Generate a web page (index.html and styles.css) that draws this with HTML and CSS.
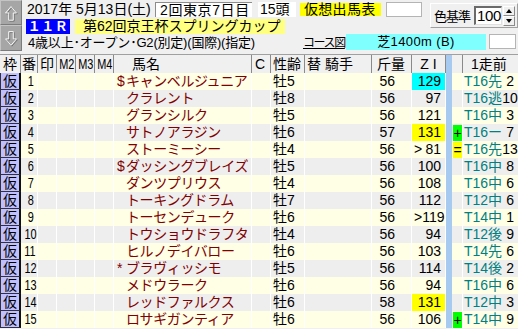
FILE: index.html
```html
<!DOCTYPE html>
<html lang="ja">
<head>
<meta charset="utf-8">
<link rel="stylesheet" href="styles.css">
</head>
<body>
<div class="top">
  <div class="arrows">
    <div class="abtn up">
      <svg width="22" height="23" viewBox="0 0 22 23">
        <polygon points="12,6 18,13 14.5,13 14.5,21 9.5,21 9.5,13 6,13" fill="none" stroke="#6e6e6e"/>
        <polygon points="11,5 17,12 13.5,12 13.5,20 8.5,20 8.5,12 5,12" fill="none" stroke="#fff"/>
      </svg>
    </div>
    <div class="abtn down">
      <svg width="22" height="24" viewBox="0 0 22 24">
        <polygon points="12,21 18,14 14.5,14 14.5,6 9.5,6 9.5,14 6,14" fill="none" stroke="#6e6e6e"/>
        <polygon points="11,20 17,13 13.5,13 13.5,5 8.5,5 8.5,13 5,13" fill="none" stroke="#fff"/>
      </svg>
    </div>
  </div>
  <div class="info">
    <div class="upper">
      <div class="lines">
        <div class="line1">
          <span class="date">2017年 5月13日(土)</span>
          <span class="meet">2回東京7日目</span>
          <span class="heads">15頭</span>
          <span class="kind">仮想出馬表</span>
          <span class="blank1"></span>
        </div>
        <div class="line2">
          <span class="rno">１１Ｒ</span>
          <span class="rname">第62回京王杯スプリングカップ</span>
        </div>
      </div>
      <div class="panel">
        <span class="plabel">色基準</span>
        <span class="pinput">100</span>
        <span class="spin">
          <span class="sbtn"><svg width="10" height="8" viewBox="0 0 10 8"><polygon points="5,2 8,6 2,6" fill="#000"/></svg></span>
          <span class="sbtn"><svg width="10" height="8" viewBox="0 0 10 8"><polygon points="2,2 8,2 5,6" fill="#000"/></svg></span>
        </span>
      </div>
    </div>
    <div class="line3">
      <span class="cond">4歳以上･オープン･G2(別定)(国際)(指定)</span>
      <span class="clink">コース図</span>
      <span class="course">芝1400m (B)</span>
      <span class="blank2"></span>
    </div>
  </div>
</div>

<div class="table">
  <div class="row hdr">
    <div class="c ctr">枠</div>
    <div class="c ctr">番</div>
    <div class="c ctr">印</div>
    <div class="c ctr"><span class="nar">M2</span></div>
    <div class="c ctr"><span class="nar">M3</span></div>
    <div class="c ctr"><span class="nar">M4</span></div>
    <div class="c hname">馬名</div>
    <div class="c hc">C</div>
    <div class="c sx">性齢</div>
    <div class="c sx">替 騎手</div>
    <div class="c hkin">斤量</div>
    <div class="c ctr hzi">ZI</div>
    <div class="st"></div>
    <div class="c"></div>
    <div class="c hprev">1走前</div>
  </div>
  <div class="rows">
    <div class="row"><div class="waku">仮</div><div class="c no"><span class="nar">1</span></div><div class="c"></div><div class="c"></div><div class="c"></div><div class="c"></div><div class="c nm"><span class="pre">$</span>キャンベルジュニア</div><div class="c"></div><div class="c sx">牡5</div><div class="c"></div><div class="c kin">56</div><div class="c zi cy">129</div><div class="st"></div><div class="c mk"></div><div class="c prev"><span class="pos">T16先</span><span class="rk">2</span></div></div>
    <div class="row"><div class="waku">仮</div><div class="c no"><span class="nar">2</span></div><div class="c"></div><div class="c"></div><div class="c"></div><div class="c"></div><div class="c nm"><span class="pre"></span>クラレント</div><div class="c"></div><div class="c sx">牡8</div><div class="c"></div><div class="c kin">56</div><div class="c zi">97</div><div class="st"></div><div class="c mk"></div><div class="c prev"><span class="pos">T16逃</span><span class="rk">10</span></div></div>
    <div class="row"><div class="waku">仮</div><div class="c no"><span class="nar">3</span></div><div class="c"></div><div class="c"></div><div class="c"></div><div class="c"></div><div class="c nm"><span class="pre"></span>グランシルク</div><div class="c"></div><div class="c sx">牡5</div><div class="c"></div><div class="c kin">56</div><div class="c zi">121</div><div class="st"></div><div class="c mk"></div><div class="c prev"><span class="pos">T16中</span><span class="rk">3</span></div></div>
    <div class="row"><div class="waku">仮</div><div class="c no"><span class="nar">4</span></div><div class="c"></div><div class="c"></div><div class="c"></div><div class="c"></div><div class="c nm"><span class="pre"></span>サトノアラジン</div><div class="c"></div><div class="c sx">牡6</div><div class="c"></div><div class="c kin">57</div><div class="c zi yl">131</div><div class="st"></div><div class="c mk"><span class="mkv gr">+</span></div><div class="c prev"><span class="pos">T16ー</span><span class="rk">7</span></div></div>
    <div class="row"><div class="waku">仮</div><div class="c no"><span class="nar">5</span></div><div class="c"></div><div class="c"></div><div class="c"></div><div class="c"></div><div class="c nm"><span class="pre"></span>ストーミーシー</div><div class="c"></div><div class="c sx">牡4</div><div class="c"></div><div class="c kin">56</div><div class="c zi gt"><span class="gtm">&gt;</span><span>81</span></div><div class="st"></div><div class="c mk"><span class="mkv yw">=</span></div><div class="c prev"><span class="pos">T16先</span><span class="rk">13</span></div></div>
    <div class="row"><div class="waku">仮</div><div class="c no"><span class="nar">6</span></div><div class="c"></div><div class="c"></div><div class="c"></div><div class="c"></div><div class="c nm"><span class="pre">$</span>ダッシングブレイズ</div><div class="c"></div><div class="c sx">牡5</div><div class="c"></div><div class="c kin">56</div><div class="c zi">100</div><div class="st"></div><div class="c mk"></div><div class="c prev"><span class="pos">T16中</span><span class="rk">8</span></div></div>
    <div class="row"><div class="waku">仮</div><div class="c no"><span class="nar">7</span></div><div class="c"></div><div class="c"></div><div class="c"></div><div class="c"></div><div class="c nm"><span class="pre"></span>ダンツプリウス</div><div class="c"></div><div class="c sx">牡4</div><div class="c"></div><div class="c kin">56</div><div class="c zi">108</div><div class="st"></div><div class="c mk"></div><div class="c prev"><span class="pos">T16中</span><span class="rk">6</span></div></div>
    <div class="row"><div class="waku">仮</div><div class="c no"><span class="nar">8</span></div><div class="c"></div><div class="c"></div><div class="c"></div><div class="c"></div><div class="c nm"><span class="pre"></span>トーキングドラム</div><div class="c"></div><div class="c sx">牡7</div><div class="c"></div><div class="c kin">56</div><div class="c zi">112</div><div class="st"></div><div class="c mk"></div><div class="c prev"><span class="pos">T12中</span><span class="rk">6</span></div></div>
    <div class="row"><div class="waku">仮</div><div class="c no"><span class="nar">9</span></div><div class="c"></div><div class="c"></div><div class="c"></div><div class="c"></div><div class="c nm"><span class="pre"></span>トーセンデューク</div><div class="c"></div><div class="c sx">牡6</div><div class="c"></div><div class="c kin">56</div><div class="c zi gt"><span class="gtm">&gt;</span><span>119</span></div><div class="st"></div><div class="c mk"></div><div class="c prev"><span class="pos">T14中</span><span class="rk">1</span></div></div>
    <div class="row"><div class="waku">仮</div><div class="c no"><span class="nar">10</span></div><div class="c"></div><div class="c"></div><div class="c"></div><div class="c"></div><div class="c nm"><span class="pre"></span>トウショウドラフタ</div><div class="c"></div><div class="c sx">牡4</div><div class="c"></div><div class="c kin">56</div><div class="c zi">94</div><div class="st"></div><div class="c mk"></div><div class="c prev"><span class="pos">T12後</span><span class="rk">9</span></div></div>
    <div class="row"><div class="waku">仮</div><div class="c no"><span class="nar">11</span></div><div class="c"></div><div class="c"></div><div class="c"></div><div class="c"></div><div class="c nm"><span class="pre"></span>ヒルノデイバロー</div><div class="c"></div><div class="c sx">牡6</div><div class="c"></div><div class="c kin">56</div><div class="c zi">103</div><div class="st"></div><div class="c mk"></div><div class="c prev"><span class="pos">T14先</span><span class="rk">6</span></div></div>
    <div class="row"><div class="waku">仮</div><div class="c no"><span class="nar">12</span></div><div class="c"></div><div class="c"></div><div class="c"></div><div class="c"></div><div class="c nm"><span class="pre">*</span>ブラヴィッシモ</div><div class="c"></div><div class="c sx">牡5</div><div class="c"></div><div class="c kin">56</div><div class="c zi">114</div><div class="st"></div><div class="c mk"></div><div class="c prev"><span class="pos">T14後</span><span class="rk">2</span></div></div>
    <div class="row"><div class="waku">仮</div><div class="c no"><span class="nar">13</span></div><div class="c"></div><div class="c"></div><div class="c"></div><div class="c"></div><div class="c nm"><span class="pre"></span>メドウラーク</div><div class="c"></div><div class="c sx">牡6</div><div class="c"></div><div class="c kin">56</div><div class="c zi">94</div><div class="st"></div><div class="c mk"></div><div class="c prev"><span class="pos">T16中</span><span class="rk">6</span></div></div>
    <div class="row"><div class="waku">仮</div><div class="c no"><span class="nar">14</span></div><div class="c"></div><div class="c"></div><div class="c"></div><div class="c"></div><div class="c nm"><span class="pre"></span>レッドファルクス</div><div class="c"></div><div class="c sx">牡6</div><div class="c"></div><div class="c kin">58</div><div class="c zi yl">131</div><div class="st"></div><div class="c mk"></div><div class="c prev"><span class="pos">T12中</span><span class="rk">3</span></div></div>
    <div class="row"><div class="waku">仮</div><div class="c no"><span class="nar">15</span></div><div class="c"></div><div class="c"></div><div class="c"></div><div class="c"></div><div class="c nm"><span class="pre"></span>ロサギガンティア</div><div class="c"></div><div class="c sx">牡6</div><div class="c"></div><div class="c kin">56</div><div class="c zi">106</div><div class="st"></div><div class="c mk"><span class="mkv gr">+</span></div><div class="c prev"><span class="pos">T14中</span><span class="rk">9</span></div></div>
  </div>
</div>
</body>
</html>
```

FILE: styles.css
```css
html, body {
  margin: 0;
  padding: 0;
}
body {
  width: 518px;
  height: 329px;
  overflow: hidden;
  background: #f0f0f0;
  font-family: "Liberation Sans", "Noto Sans CJK JP", sans-serif;
  font-size: 14px;
  color: #000;
}

/* ---------- top area ---------- */
.top {
  display: flex;
  height: 54px;
}
.arrows {
  width: 22px;
  display: flex;
  flex-direction: column;
}
.abtn {
  box-sizing: border-box;
  background: #a6a6a6;
  border: 1px solid;
  border-color: #c4c4c4 #7c7c7c #7c7c7c #c4c4c4;
  display: flex;
  align-items: flex-start;
  justify-content: center;
  overflow: hidden;
}
.abtn.up { height: 25px; }
.abtn.down { height: 26px; }
.abtn svg { display: block; }

.info {
  flex: 1;
  display: flex;
  flex-direction: column;
}
.upper {
  display: flex;
  height: 34px;
}
.lines {
  width: 408px;
  display: flex;
  flex-direction: column;
}
.line1 {
  box-sizing: border-box;
  height: 19px;
  padding-top: 2px;
  display: flex;
  align-items: flex-start;
}
.line1 > span {
  box-sizing: border-box;
  height: 15px;
  line-height: 15px;
  white-space: nowrap;
}
.date {
  width: 133px;
  padding-left: 5px;
}
.meet {
  width: 97px;
  background: #fff;
  border-top: 1px solid #8c8c8c;
  border-left: 1px solid #8c8c8c;
  padding-left: 4px;
  line-height: 14px !important;
  letter-spacing: 0.6px;
}
.heads {
  margin-left: 6px;
  width: 38px;
  background: #fff;
  padding-left: 2px;
}
.kind {
  margin-left: 4px;
  margin-top: 1px;
  width: 81px;
  height: 13px !important;
  line-height: 13px !important;
  background: #ffff00;
  padding-left: 4px;
  letter-spacing: 0.3px;
}
.blank1 {
  margin-left: 5px;
  width: 36px;
  background: #fff;
  border: 1px solid #b4b4b4;
}
.line2 {
  height: 15px;
  display: flex;
}
.rno {
  margin-left: 4px;
  width: 44px;
  height: 15px;
  background: #0000ff;
  color: #fff;
  font-weight: bold;
  font-size: 13px;
  line-height: 15px;
  text-align: center;
  letter-spacing: 0.5px;
}
.rname {
  margin-left: 5px;
  width: 210px;
  box-sizing: border-box;
  height: 15px;
  line-height: 15px;
  background: #ffff80;
  padding-left: 8px;
  white-space: nowrap;
  overflow: hidden;
}
.panel {
  box-sizing: border-box;
  width: 88px;
  height: 25px;
  margin-top: 3px;
  border: 1px solid;
  border-color: #ffffff #a0a0a0 #a0a0a0 #ffffff;
  display: flex;
  align-items: center;
}
.plabel {
  padding-left: 3px;
  width: 43px;
  box-sizing: border-box;
  font-size: 13px;
  line-height: 16px;
  letter-spacing: -1px;
  white-space: nowrap;
  margin-top: 3px;
}
.pinput {
  box-sizing: border-box;
  width: 28px;
  height: 19px;
  background: #fff;
  border-top: 2px solid #6a6a6a;
  border-left: 2px solid #6a6a6a;
  border-bottom: 1px solid #e0e0e0;
  border-right: 1px solid #e0e0e0;
  font-size: 15px;
  line-height: 16px;
  padding-left: 1px;
  letter-spacing: -0.4px;
  white-space: nowrap;
}
.spin {
  margin-left: 1px;
  width: 12px;
  display: flex;
  flex-direction: column;
}
.sbtn {
  box-sizing: border-box;
  height: 10px;
  background: #f0f0f0;
  border: 1px solid;
  border-color: #fff #8a8a8a #8a8a8a #fff;
  display: flex;
  align-items: center;
  justify-content: center;
}
.sbtn svg { display: block; }

.line3 {
  height: 17px;
  display: flex;
  align-items: flex-start;
}
.cond {
  box-sizing: border-box;
  width: 281px;
  padding-left: 6px;
  font-size: 13px;
  line-height: 16px;
  margin-top: 1px;
  white-space: nowrap;
  letter-spacing: -0.2px;
}
.clink {
  width: 38px;
  font-size: 12px;
  line-height: 16px;
  margin-top: 1px;
  letter-spacing: -1.4px;
  text-decoration: underline;
  white-space: nowrap;
}
.course {
  margin-left: 5px;
  width: 140px;
  height: 16px;
  line-height: 16px;
  background: #80ffff;
  text-align: center;
  font-size: 13px;
  letter-spacing: 0.4px;
  white-space: nowrap;
}
.blank2 {
  box-sizing: border-box;
  margin-left: 3px;
  width: 27px;
  height: 15px;
  background: #fff;
  border: 1px solid #b4b4b4;
}

/* ---------- table ---------- */
.table {
  border-top: 1px solid #a0a0a0;
}
.row {
  display: grid;
  grid-template-columns: 21px 17px 19px 19px 19px 19px 138px 19px 34px 67px 40px 34px 6px 11px 55px;
  height: 17px;
  line-height: 17px;
}
.c {
  box-sizing: border-box;
  border-right: 1px solid #ffffff;
  white-space: nowrap;
  overflow: hidden;
}
.hdr {
  height: 18px;
  line-height: 18px;
  background: #f0f0f0;
}
.hdr .c {
  border-right: 1px solid #8a8a8a;
}
.hdr .c:last-child { border-right: none; }
.ctr { text-align: center; }
.nar {
  display: inline-block;
  transform: scaleX(0.78);
}
.hname { padding-left: 18px; }
.hc { padding-left: 3px; }
.sx { padding-left: 2px; }
.hkin { padding-left: 5px; }
.hzi { letter-spacing: 4px; padding-left: 4px; }
.hprev { padding-left: 8px; }

.rows .row { background: #ffffe6; }
.rows .row:nth-child(even) { background: #eeeeee; }

.waku {
  box-sizing: border-box;
  background: #c0c0ff;
  border-right: 2px solid #101010;
  border-bottom: 1px solid #303040;
  border-left: 1px solid #303040;
  text-align: center;
  line-height: 16px;
}
.st { background: #a6caf0; }
.no {
  text-align: right;
  padding-right: 3px;
}
.no .nar { transform-origin: right center; }
.nm {
  padding-left: 3px;
  color: #800000;
  letter-spacing: -0.4px;
}
.pre {
  display: inline-block;
  width: 9px;
  letter-spacing: 0;
}
.kin {
  text-align: right;
  padding-right: 16px;
}
.zi {
  text-align: right;
  padding-right: 4px;
}
.zi.gt {
  display: flex;
  justify-content: space-between;
  padding-left: 2px;
}
.cy { background: #00ffff; }
.yl { background: #ffff00; }
.mk {
  display: flex;
  padding: 0 0 0 1px;
}
.mkv {
  flex: 1;
  text-align: center;
  line-height: 16px;
  height: 16px;
  margin-top: 1px;
}
.gr { background: #00ff00; }
.yw { background: #ffff00; }
.prev {
  border-right: none;
  padding-left: 1px;
  overflow: visible;
}
.pos { color: #008080; }
.rk {
  display: inline-block;
  width: 12px;
  text-align: right;
}
```
